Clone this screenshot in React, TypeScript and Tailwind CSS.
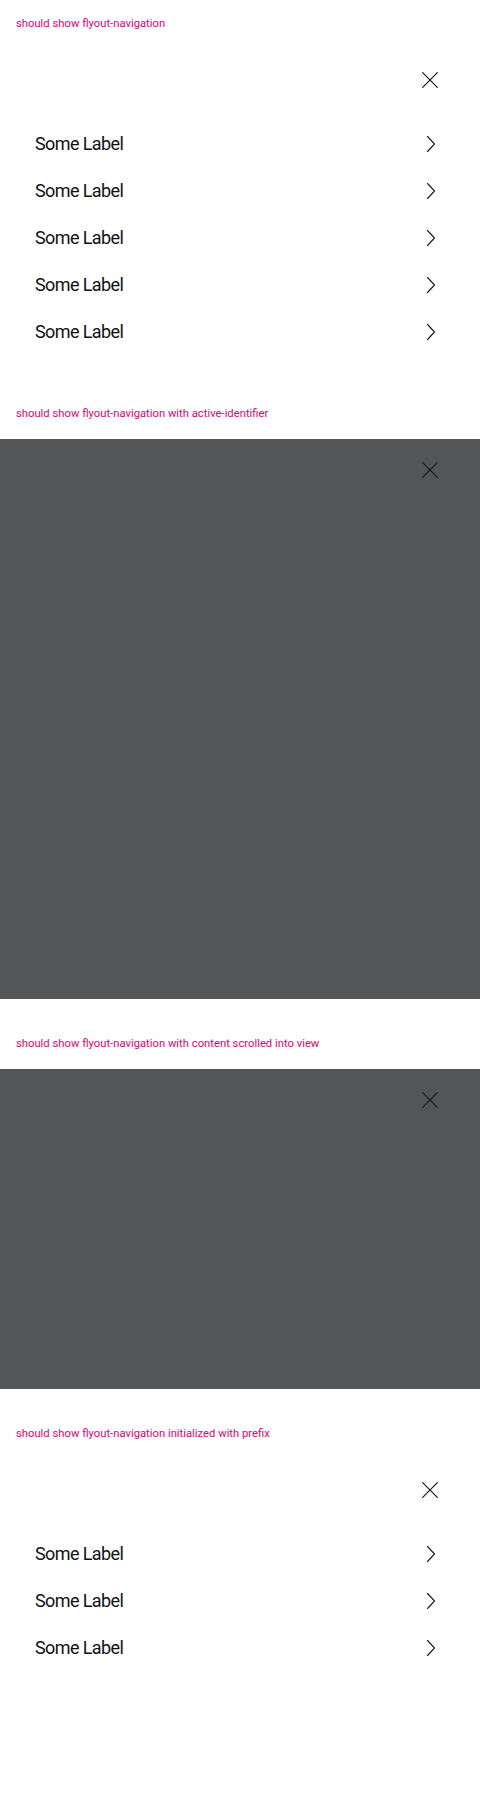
import React from "react";

const CloseIcon = () => (
  <svg width="16" height="16" viewBox="0 0 16 16" fill="none" aria-hidden="true">
    <path d="M0.7 0.7 L15.3 15.3 M15.3 0.7 L0.7 15.3" stroke="#191919" strokeWidth="1.2" strokeLinecap="round" />
  </svg>
);

const Chevron = () => (
  <svg width="10" height="18" viewBox="0 0 10 18" fill="none" aria-hidden="true">
    <path d="M1.5 1.5 L8.5 9 L1.5 16.5" stroke="#191919" strokeWidth="1.1" strokeLinecap="round" strokeLinejoin="round" />
  </svg>
);

const Header = () => (
  <div className="h-[62px] flex items-center justify-end pr-[42px]">
    <button className="w-4 h-4 flex items-center justify-center">
      <CloseIcon />
    </button>
  </div>
);

const NavList = ({ count }: { count: number }) => (
  <ul className="pt-[9px]">
    {Array.from({ length: count }).map((_, i) => (
      <li key={i} className="h-[47px] flex items-center justify-between pl-[35px] pr-[44px]">
        <span className="text-[18px] font-normal tracking-[-0.6px] text-[#111111] font-['Roboto',sans-serif]">Some Label</span>
        <Chevron />
      </li>
    ))}
  </ul>
);

const Story = ({ title, children }: { title: string; children: React.ReactNode }) => (
  <section className="pt-4 pb-[21px]">
    <p className="h-4 leading-4 text-[11.25px] text-[#e20074] pl-4 mb-[17px] font-['Roboto',sans-serif]">{title}</p>
    {children}
  </section>
);

export default function App() {
  return (
    <div className="w-[480px] bg-white font-['Roboto',sans-serif]">
      <Story title="should show flyout-navigation">
        <div className="h-[320px] bg-white">
          <Header />
          <NavList count={5} />
        </div>
      </Story>
      <Story title="should show flyout-navigation with active-identifier">
        <div className="h-[560px] bg-[#545557]">
          <Header />
        </div>
      </Story>
      <Story title="should show flyout-navigation with content scrolled into view">
        <div className="h-[320px] bg-[#545557]">
          <Header />
        </div>
      </Story>
      <Story title="should show flyout-navigation initialized with prefix">
        <div className="h-[320px] bg-white">
          <Header />
          <NavList count={3} />
        </div>
      </Story>
    </div>
  );
}
